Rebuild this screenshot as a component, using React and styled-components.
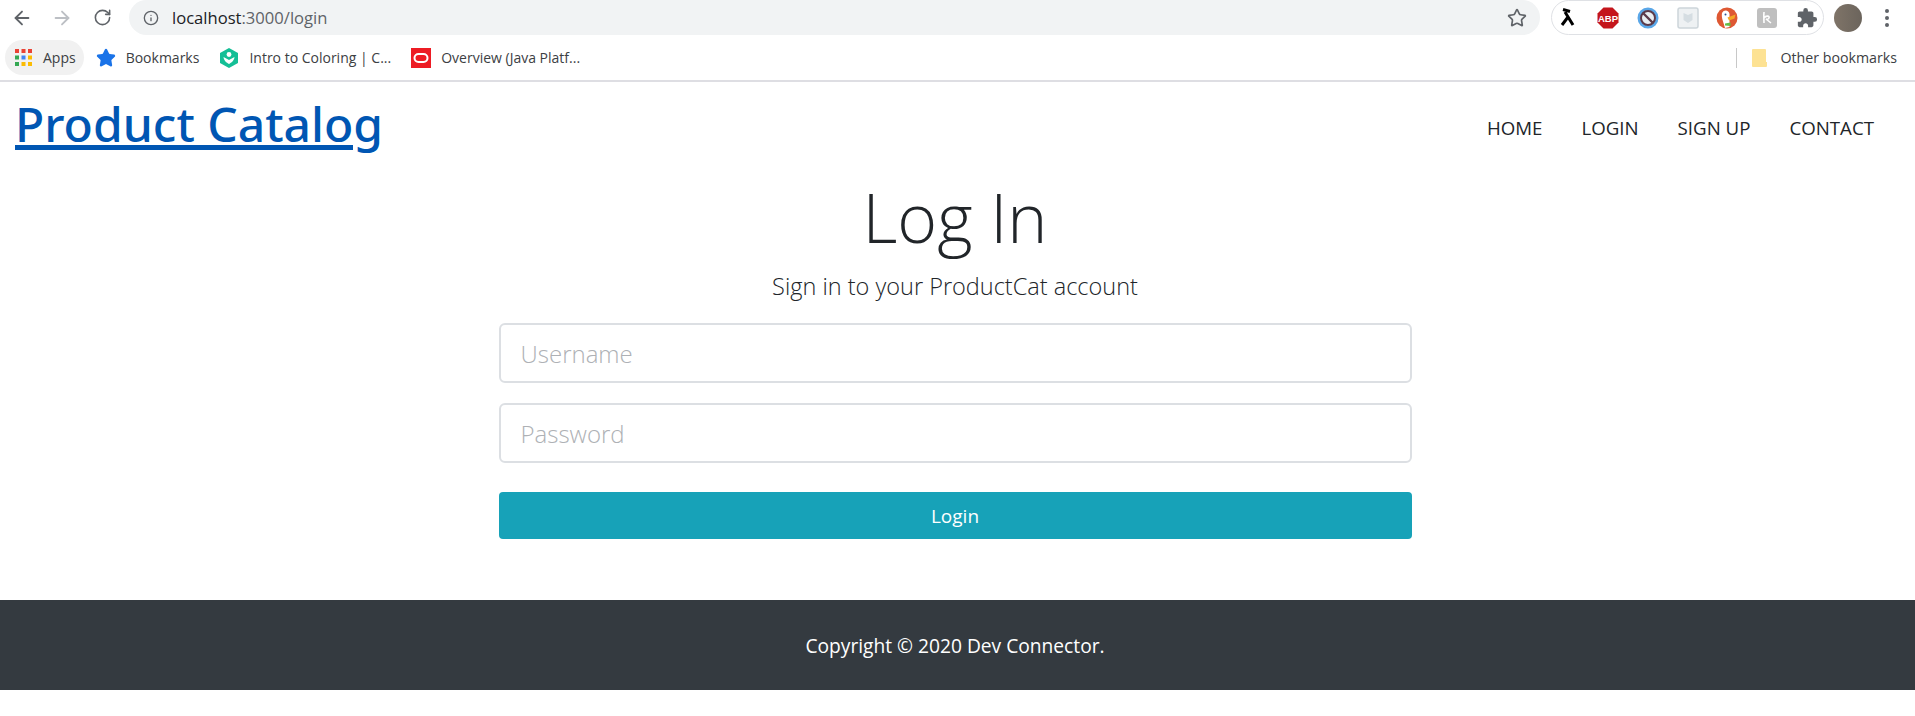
import React from "react";
import styled, { createGlobalStyle } from "styled-components";
import { ArrowLeft, ArrowRight, RotateCw, Info, Star } from "lucide-react";
import { MdExtension } from "react-icons/md";

const GlobalStyle = createGlobalStyle`
  html, body {
    margin: 0;
    padding: 0;
    background: #fff;
    font-family: "Open Sans", "Noto Sans", sans-serif;
  }
  * { box-sizing: border-box; }
`;

const appsDots = ["#ea4335", "#ea4335", "#ea4335", "#34a853", "#4285f4", "#fbbc04", "#34a853", "#fbbc04", "#fbbc04"];

const App = () => {
  return (
    <>
      <GlobalStyle />
      <Toolbar>
        <NavIcon><ArrowLeft size={22} color="#5f6368" strokeWidth={2} /></NavIcon>
        <NavIcon><ArrowRight size={22} color="#bcbfc4" strokeWidth={2} /></NavIcon>
        <NavIcon><RotateCw size={19} color="#5f6368" strokeWidth={2} /></NavIcon>
        <UrlPill>
          <Info size={16} color="#5f6368" strokeWidth={2} />
          <UrlText>localhost<UrlMuted>:3000/login</UrlMuted></UrlText>
          <PillStar><Star size={20} color="#5f6368" strokeWidth={2} /></PillStar>
        </UrlPill>
        <Extensions>
          <ExtSlot>
            <svg width="22" height="22" viewBox="0 0 22 22">
              <path d="M6 2.5 L13 4.5 M8 5 L16 18 M11 10 L5 18" stroke="#000" strokeWidth="3" fill="none" />
            </svg>
          </ExtSlot>
          <ExtSlot>
            <svg width="22" height="22" viewBox="0 0 22 22">
              <polygon points="6.5,0.5 15.5,0.5 21.5,6.5 21.5,15.5 15.5,21.5 6.5,21.5 0.5,15.5 0.5,6.5" fill="#c4161c" />
              <text x="11" y="14.5" textAnchor="middle" fontSize="9.5" fontWeight="700" fill="#fff" fontFamily="Liberation Sans">ABP</text>
            </svg>
          </ExtSlot>
          <ExtSlot>
            <svg width="22" height="22" viewBox="0 0 22 22">
              <circle cx="11" cy="11" r="9" fill="#e8eef2" stroke="#5aa7e8" strokeWidth="3" />
              <circle cx="11" cy="11" r="7" fill="none" stroke="#5b3a4a" strokeWidth="2" />
              <path d="M6.5 6.5 L15.5 15.5" stroke="#5b3a4a" strokeWidth="2.4" />
            </svg>
          </ExtSlot>
          <ExtSlot>
            <svg width="22" height="22" viewBox="0 0 22 22">
              <rect x="1" y="1" width="20" height="20" rx="2" fill="#eef1f3" stroke="#cdd5da" strokeWidth="1.5" />
              <path d="M6.5 6 L11 8 L15.5 6 L15.5 13 L11 16 L6.5 13 Z" fill="#d5dde2" />
            </svg>
          </ExtSlot>
          <ExtSlot>
            <svg width="22" height="22" viewBox="0 0 22 22">
              <circle cx="11" cy="11" r="10.5" fill="#de5833" />
              <path d="M6 6 C8 2 13 3 13.5 7 L13.5 20 L9 21 C8 16 5 11 6 6 Z" fill="#fff" />
              <path d="M11.5 10.5 L19.5 7.5 L18.5 11.5 L13 13.5 Z" fill="#f5a623" />
              <path d="M9 16.5 L14.5 15.5 L14.5 19 L9 18.5 Z" fill="#65bc46" />
              <circle cx="9.5" cy="7.5" r="1" fill="#2d4f8e" />
            </svg>
          </ExtSlot>
          <ExtSlot>
            <svg width="22" height="22" viewBox="0 0 22 22">
              <rect x="1" y="1" width="20" height="20" rx="3" fill="#bfbfbf" />
              <path d="M8 5 C7.5 9 8 13 8 16 M8 11 C10 8 14 9 13 11 C12 13 10 12 10 12 L15 16" fill="none" stroke="#fff" strokeWidth="1.6" />
            </svg>
          </ExtSlot>
          <ExtSlot><MdExtension size={22} color="#5f6368" /></ExtSlot>
        </Extensions>
        <Avatar />
        <MenuDots>
          <svg width="6" height="20" viewBox="0 0 6 20">
            <circle cx="3" cy="3" r="2" fill="#5f6368" />
            <circle cx="3" cy="10" r="2" fill="#5f6368" />
            <circle cx="3" cy="17" r="2" fill="#5f6368" />
          </svg>
        </MenuDots>
      </Toolbar>
      <BookmarksBar>
        <AppsChip>
          <svg width="17" height="17" viewBox="0 0 17 17">
            {appsDots.map((c, i) => (
              <rect key={i} x={(i % 3) * 6.5} y={Math.floor(i / 3) * 6.5} width="4" height="4" fill={c} />
            ))}
          </svg>
          <BookmarkLabel>Apps</BookmarkLabel>
        </AppsChip>
        <Bookmark>
          <Star size={20} color="#1a73e8" fill="#1a73e8" />
          <BookmarkLabel>Bookmarks</BookmarkLabel>
        </Bookmark>
        <Bookmark>
          <svg width="20" height="20" viewBox="0 0 20 20">
            <polygon points="10,0 19,5 19,15 10,20 1,15 1,5" fill="#14bf96" />
            <circle cx="10" cy="6.5" r="2.4" fill="#fff" />
            <path d="M4.5 9 C5 13 7.5 14.5 10 16 C12.5 14.5 15 13 15.5 9 L10 12 Z" fill="#fff" />
          </svg>
          <BookmarkLabel>Intro to Coloring | C...</BookmarkLabel>
        </Bookmark>
        <Bookmark>
          <svg width="20" height="20" viewBox="0 0 20 20">
            <rect width="20" height="20" fill="#ed1c24" />
            <rect x="3.5" y="6" width="13" height="8" rx="4" fill="none" stroke="#fff" strokeWidth="2" />
          </svg>
          <BookmarkLabel>Overview (Java Platf...</BookmarkLabel>
        </Bookmark>
        <OtherBookmarks>
          <svg width="15" height="18" viewBox="0 0 15 18">
            <path d="M1 0 H13 Q14 0 14 1 V13 H15 V17 Q15 18 14 18 H1 Q0 18 0 17 V1 Q0 0 1 0 Z" fill="#fde293" />
          </svg>
          <OtherLabel>Other bookmarks</OtherLabel>
        </OtherBookmarks>
      </BookmarksBar>
      <Navbar>
        <Brand href="#">Product Catalog</Brand>
        <NavLinks>
          <NavLink href="#">HOME</NavLink>
          <NavLink href="#">LOGIN</NavLink>
          <NavLink href="#">SIGN UP</NavLink>
          <NavLink href="#">CONTACT</NavLink>
        </NavLinks>
      </Navbar>
      <Main>
        <Title>Log In</Title>
        <Lead>Sign in to your ProductCat account</Lead>
        <Form onSubmit={(e) => e.preventDefault()}>
          <Input type="text" placeholder="Username" />
          <Input type="password" placeholder="Password" />
          <Submit type="submit">Login</Submit>
        </Form>
      </Main>
      <Footer>Copyright © 2020 Dev Connector.</Footer>
    </>
  );
};

export default App;

const Toolbar = styled.div`
  display: flex;
  align-items: center;
  height: 40px;
  padding: 0 3px 5px 10px;
  background: #fff;
`;
const NavIcon = styled.div`
  display: flex;
  justify-content: center;
  width: 40px;
  &:first-child {
    width: 24px;
    margin-right: 8px;
  }
`;
const UrlPill = styled.div`
  display: flex;
  align-items: center;
  flex: 1;
  height: 35px;
  margin-left: 7px;
  margin-right: 11px;
  padding: 0 13px 0 14px;
  border-radius: 18px;
  background: #f1f3f4;
`;
const UrlText = styled.span`
  margin-left: 13px;
  font-size: 16.6px;
  color: #202124;
`;
const UrlMuted = styled.span`
  color: #5f6368;
`;
const PillStar = styled.div`
  display: flex;
  margin-left: auto;
`;
const Extensions = styled.div`
  display: flex;
  align-items: center;
  gap: 16px;
  height: 35px;
  width: 273px;
  padding: 0 4px;
  border: 1px solid #dfe1e5;
  border-radius: 18px;
`;
const ExtSlot = styled.div`
  display: flex;
  justify-content: center;
  width: 24px;
`;
const Avatar = styled.div`
  width: 28px;
  height: 28px;
  margin-left: 10px;
  border-radius: 50%;
  background: linear-gradient(90deg, #7f7468, #6b645c);
`;
const MenuDots = styled.div`
  display: flex;
  justify-content: center;
  width: 50px;
`;
const BookmarksBar = styled.div`
  display: flex;
  align-items: center;
  height: 42px;
  padding: 0 0 5px 5px;
  border-bottom: 2px solid #dedee3;
`;
const Bookmark = styled.div`
  display: flex;
  align-items: center;
  gap: 10px;
  padding: 0 10px;
`;
const AppsChip = styled(Bookmark)`
  gap: 11px;
  height: 35px;
  margin-right: 2px;
  padding-right: 8px;
  border-radius: 18px;
  background: #f1f1f1;
`;
const OtherBookmarks = styled(Bookmark)`
  gap: 14px;
  margin-left: auto;
  padding: 0 18px 0 15px;
  border-left: 1px solid #c8c8c8;
  height: 20px;
`;
const BookmarkLabel = styled.span`
  font-size: 14px;
  color: #3c4043;
`;
const OtherLabel = styled(BookmarkLabel)`
  font-size: 14.2px;
`;
const Navbar = styled.nav`
  display: flex;
  align-items: center;
  justify-content: space-between;
  height: 82px;
  padding: 0 41px 0 15px;
`;
const Brand = styled.a`
  font-family: "Noto Sans", sans-serif;
  font-size: 48px;
  font-weight: 500;
  color: #0056b3;
  text-decoration: underline;
  text-decoration-thickness: 5px;
`;
const NavLinks = styled.div`
  display: flex;
  gap: 39px;
  padding-top: 8px;
`;
const NavLink = styled.a`
  font-size: 18.7px;
  color: #212529;
  text-decoration: none;
`;
const Main = styled.main`
  display: flex;
  flex-direction: column;
  align-items: center;
  padding: 12px 5px 0 0;
`;
const Title = styled.h1`
  margin: 0;
  font-size: 68px;
  line-height: 82px;
  font-weight: 300;
  color: #212529;
`;
const Lead = styled.p`
  margin: 12px 0 0;
  font-size: 23.5px;
  line-height: 32px;
  font-weight: 300;
  color: #212529;
`;
const Form = styled.form`
  display: flex;
  flex-direction: column;
  width: 913px;
  margin-top: 21px;
`;
const Input = styled.input`
  height: 60px;
  margin-bottom: 20px;
  padding: 0 20px;
  border: 2px solid #dcdfe3;
  border-radius: 6px;
  font-family: inherit;
  font-size: 24px;
  font-weight: 300;
  &::placeholder {
    color: #aeb1b5;
  }
`;
const Submit = styled.button`
  height: 47px;
  margin-top: 9px;
  border: 0;
  border-radius: 4px;
  background: #17a2b8;
  color: #fff;
  font-family: inherit;
  font-size: 19px;
`;
const Footer = styled.footer`
  display: flex;
  align-items: center;
  justify-content: center;
  height: 90px;
  margin-top: 61px;
  padding-right: 5px;
  background: #343a40;
  color: #fff;
  font-size: 19.2px;
`;
